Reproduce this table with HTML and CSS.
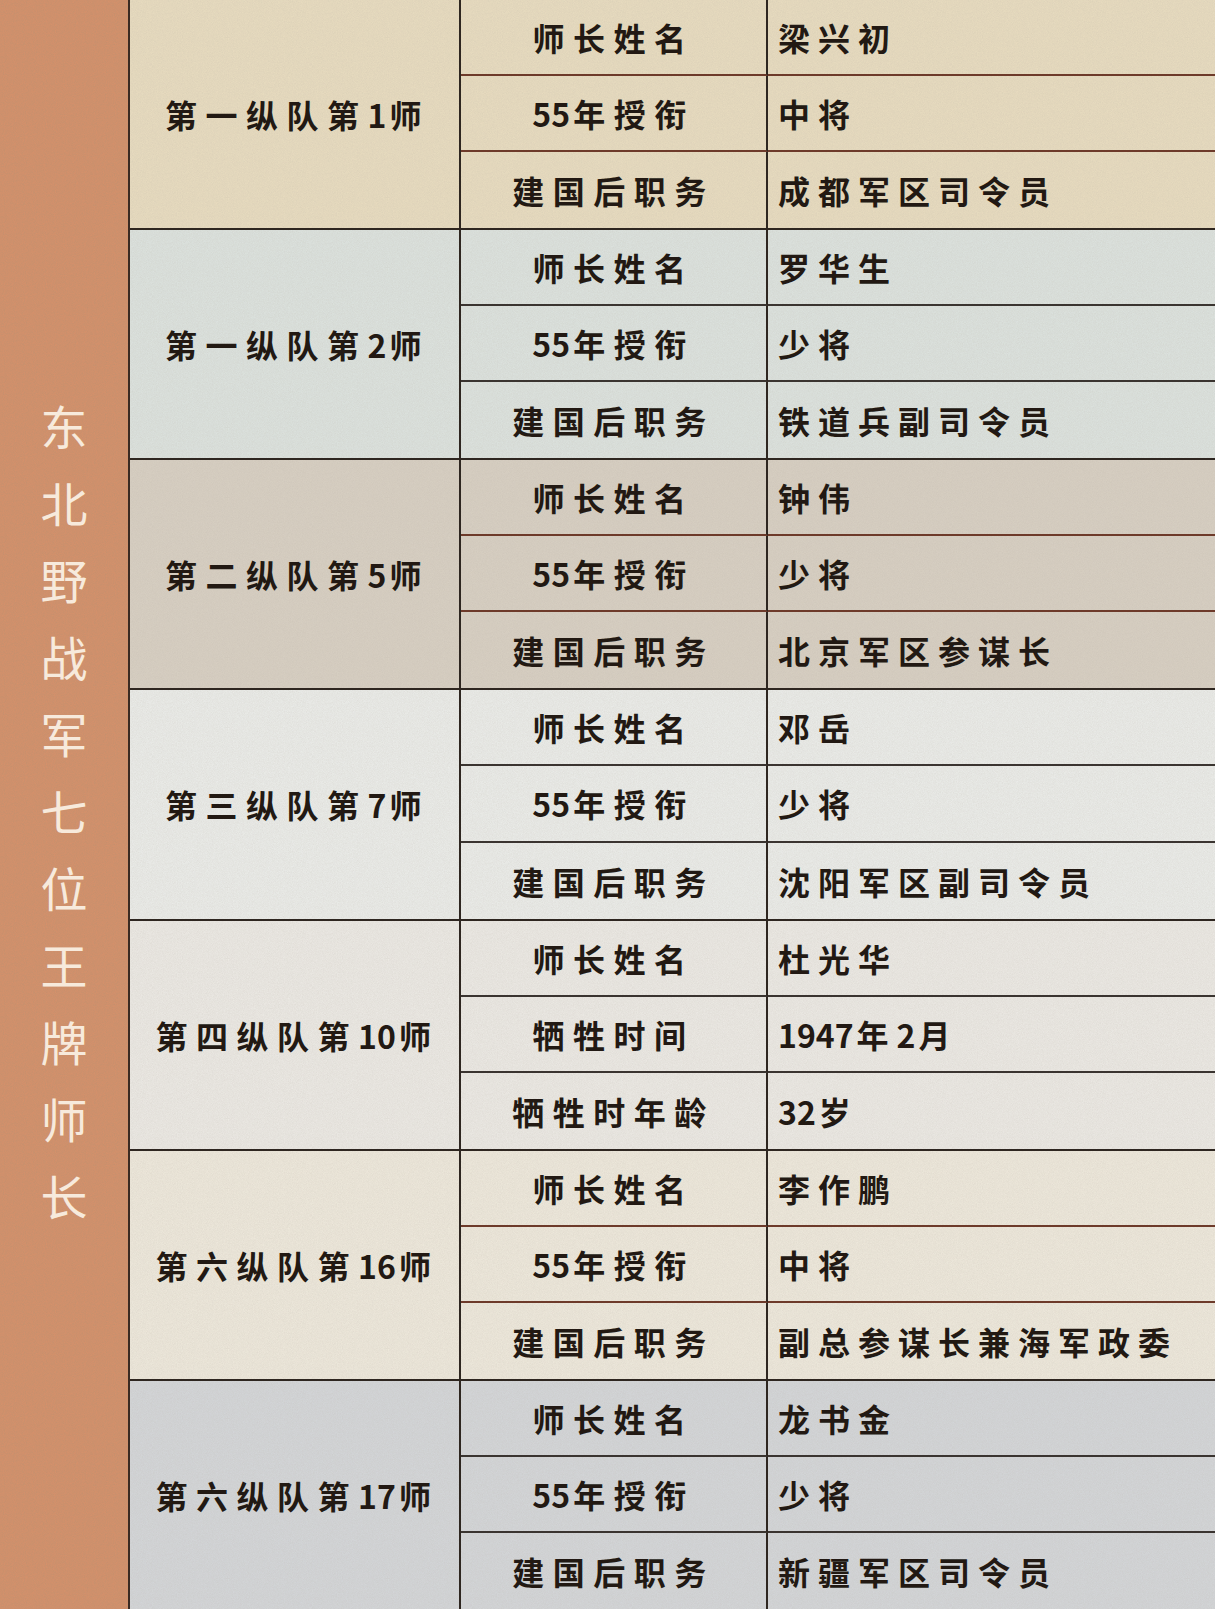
FILE: index.html
```html
<!DOCTYPE html>
<html lang="zh">
<head>
<meta charset="utf-8">
<title>东北野战军七位王牌师长</title>
<link rel="stylesheet" href="styles.css">
</head>
<body>
<div class="page">
  <aside class="side">
    <div class="side-title">
      <span>东</span><span>北</span><span>野</span><span>战</span><span>军</span><span>七</span><span>位</span><span>王</span><span>牌</span><span>师</span><span>长</span>
    </div>
  </aside>
  <main class="table">
    <section class="group g1">
      <div class="unit">第一纵队第<span class="n">1</span>师</div>
      <div class="label">师长姓名</div><div class="value">梁兴初</div>
      <div class="label"><span class="n">55</span>年授衔</div><div class="value">中将</div>
      <div class="label">建国后职务</div><div class="value">成都军区司令员</div>
    </section>
    <section class="group g2">
      <div class="unit">第一纵队第<span class="n">2</span>师</div>
      <div class="label">师长姓名</div><div class="value">罗华生</div>
      <div class="label"><span class="n">55</span>年授衔</div><div class="value">少将</div>
      <div class="label">建国后职务</div><div class="value">铁道兵副司令员</div>
    </section>
    <section class="group g3">
      <div class="unit">第二纵队第<span class="n">5</span>师</div>
      <div class="label">师长姓名</div><div class="value">钟伟</div>
      <div class="label"><span class="n">55</span>年授衔</div><div class="value">少将</div>
      <div class="label">建国后职务</div><div class="value">北京军区参谋长</div>
    </section>
    <section class="group g4">
      <div class="unit">第三纵队第<span class="n">7</span>师</div>
      <div class="label">师长姓名</div><div class="value">邓岳</div>
      <div class="label"><span class="n">55</span>年授衔</div><div class="value">少将</div>
      <div class="label">建国后职务</div><div class="value">沈阳军区副司令员</div>
    </section>
    <section class="group g5">
      <div class="unit">第四纵队第<span class="n">10</span>师</div>
      <div class="label">师长姓名</div><div class="value">杜光华</div>
      <div class="label">牺牲时间</div><div class="value"><span class="n">1947</span>年<span class="n">2</span>月</div>
      <div class="label">牺牲时年龄</div><div class="value"><span class="n">32</span>岁</div>
    </section>
    <section class="group g6">
      <div class="unit">第六纵队第<span class="n">16</span>师</div>
      <div class="label">师长姓名</div><div class="value">李作鹏</div>
      <div class="label"><span class="n">55</span>年授衔</div><div class="value">中将</div>
      <div class="label">建国后职务</div><div class="value">副总参谋长兼海军政委</div>
    </section>
    <section class="group g7">
      <div class="unit">第六纵队第<span class="n">17</span>师</div>
      <div class="label">师长姓名</div><div class="value">龙书金</div>
      <div class="label"><span class="n">55</span>年授衔</div><div class="value">少将</div>
      <div class="label">建国后职务</div><div class="value">新疆军区司令员</div>
    </section>
  </main>
</div>
</body>
</html>
```
FILE: styles.css
```css
html, body {
  margin: 0;
  padding: 0;
}
body {
  width: 1215px;
  height: 1609px;
  overflow: hidden;
  font-family: "Noto Sans CJK SC", "Liberation Sans", sans-serif;
}
.page {
  display: flex;
  width: 1215px;
  height: 1609px;
}
.side {
  width: 128px;
  flex: none;
  background-color: #d8906a;
  background-image: url("data:image/svg+xml,%3Csvg xmlns='http://www.w3.org/2000/svg' width='160' height='160'%3E%3Cfilter id='n'%3E%3CfeTurbulence type='fractalNoise' baseFrequency='1.1' numOctaves='2' stitchTiles='stitch'/%3E%3CfeColorMatrix values='0 0 0 0 0.5 0 0 0 0 0.28 0 0 0 0 0.16 0 0 0 0.7 0'/%3E%3C/filter%3E%3Crect width='160' height='160' filter='url(%23n)'/%3E%3C/svg%3E");
  border-right: 2px solid #3a2a22;
  display: flex;
  justify-content: center;
}
.side-title {
  display: flex;
  flex-direction: column;
  align-items: center;
  padding-top: 386px;
  color: #f7eadc;
  font-size: 47px;
  font-weight: 400;
  line-height: 77px;
}
.table {
  flex: 1;
  display: flex;
  flex-direction: column;
}
.group {
  flex: 1;
  display: grid;
  grid-template-columns: 331px 307px 1fr;
  grid-template-rows: repeat(3, 1fr);
  border-bottom: 2px solid #2e2620;
  color: #221913;
  font-weight: 700;
  font-size: 32px;
  background-image: url("data:image/svg+xml,%3Csvg xmlns='http://www.w3.org/2000/svg' width='160' height='160'%3E%3Cfilter id='n'%3E%3CfeTurbulence type='fractalNoise' baseFrequency='1.2' numOctaves='2' stitchTiles='stitch'/%3E%3CfeColorMatrix values='0 0 0 0 0.45 0 0 0 0 0.4 0 0 0 0 0.35 0 0 0 0.25 0'/%3E%3C/filter%3E%3Crect width='160' height='160' filter='url(%23n)'/%3E%3C/svg%3E");
}
.group:last-child {
  border-bottom: none;
}
.unit {
  grid-row: 1 / span 3;
  display: flex;
  align-items: center;
  justify-content: center;
  padding-left: 6px;
  letter-spacing: 8.5px;
  border-right: 2px solid #2e2620;
}
.label {
  display: flex;
  align-items: center;
  justify-content: center;
  letter-spacing: 8.5px;
  border-right: 2px solid #2e2620;
}
.value {
  display: flex;
  align-items: center;
  padding-left: 10px;
  letter-spacing: 8px;
}
.n {
  letter-spacing: 0;
  margin-right: 3px;
}
.label, .value {
  border-bottom: 2px solid #6d3a2a;
}
.label:nth-last-child(2), .value:last-child {
  border-bottom: none;
}
.g1 { background-color: #e9ddc0; }
.g2 { background-color: #dde4e0; }
.g3 { background-color: #d8d0c3; }
.g4 { background-color: #eceeeb; }
.g5 { background-color: #edebe6; }
.g6 { background-color: #efeadd; }
.g7 { background-color: #d4d7da; }
.g2 .label, .g2 .value, .g4 .label, .g4 .value, .g5 .label, .g5 .value, .g7 .label, .g7 .value {
  border-bottom-color: #3a3430;
}
```
